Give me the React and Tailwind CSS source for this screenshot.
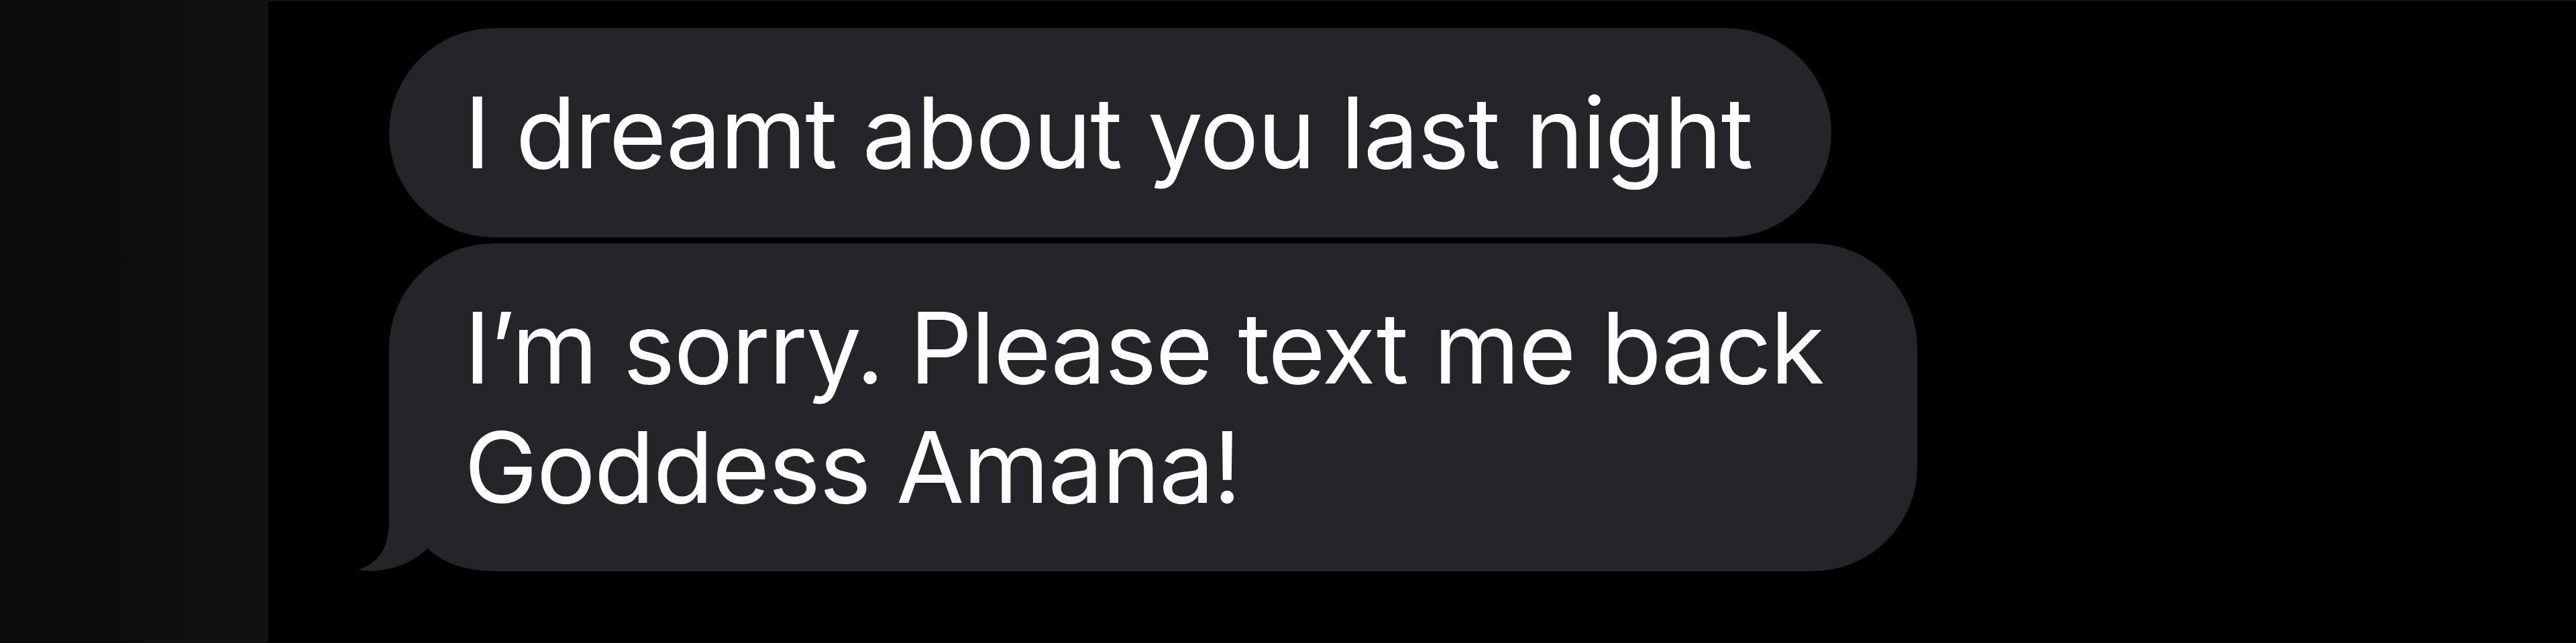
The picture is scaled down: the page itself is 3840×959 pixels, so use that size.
const bubble = "bg-[#252529] text-white";

function Tail() {
  // iOS received-message tail, drawn over the square bottom-left corner
  return (
    <svg
      className="absolute bottom-0 left-[-48px]"
      width="210"
      height="90"
      viewBox="0 0 210 90"
    >
      <rect x="0" y="0" width="210" height="90" fill="#000" />
      <path
        d="M48 0 L48 13 C48 52 36 76 2 88 C40 94 82 80 105 56 C132 80 165 90 210 90 L210 0 Z"
        fill="#252529"
      />
    </svg>
  );
}

export default function App() {
  return (
    <div className="flex h-[959px] w-[3840px] bg-black overflow-hidden font-['Inter','Noto_Sans',sans-serif]">
      <div className="w-[400px] h-full bg-gradient-to-r from-[#0b0b0d] to-[#111114]" />
      <div className="flex-1 flex flex-col gap-[9px] pt-[40px] pl-[180px] border-t-2 border-[#121212]">
        <div className={`${bubble} w-[2150px] h-[312px] rounded-[156px] flex items-center pl-[112px]`}>
          <p className="text-[147px] leading-[178px] tracking-[-2px]">I dreamt about you last night</p>
        </div>
        <div className={`${bubble} relative w-[2278px] h-[489px] rounded-[156px] rounded-bl-none pl-[112px] pt-[67px]`}>
          <p className="text-[147px] leading-[178px] tracking-[-2px]">
            I’m sorry. Please text me back
            <br />
            Goddess Amana!
          </p>
          <Tail />
        </div>
      </div>
    </div>
  );
}
